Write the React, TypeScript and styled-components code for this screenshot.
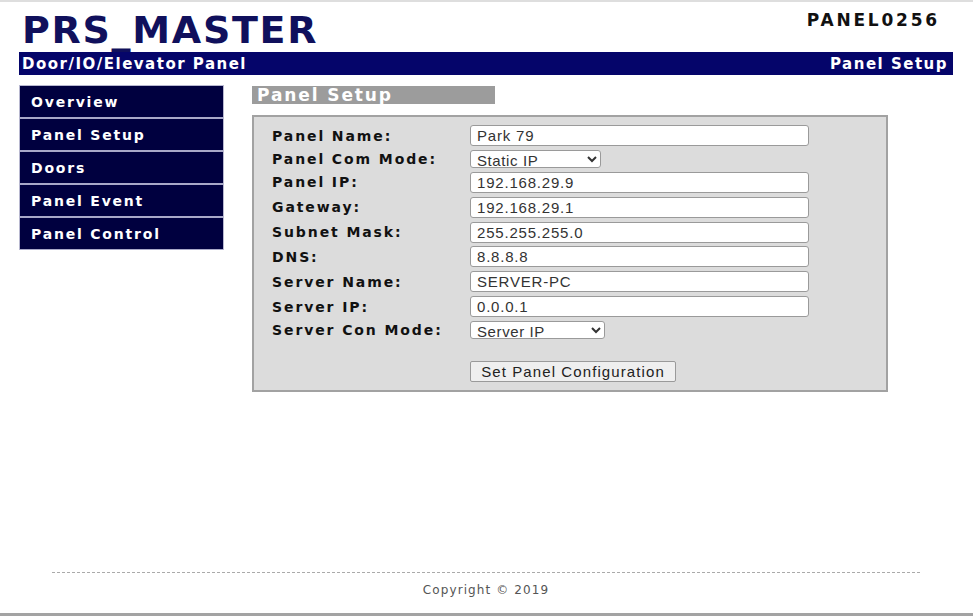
import React from 'react';
import styled, { createGlobalStyle } from 'styled-components';

const GlobalStyle = createGlobalStyle`
  html, body {
    margin: 0;
    padding: 0;
    background: #fff;
  }
  body {
    font-family: 'DejaVu Sans', Verdana, sans-serif;
  }
`;

const Page = styled.div`
  box-sizing: border-box;
  height: 616px;
  border-top: 2px solid #dedede;
  border-bottom: 3px solid #a3a3a3;
  display: flex;
  flex-direction: column;
`;

const Header = styled.header`
  padding: 0 20px 0 19px;
`;

const TitleRow = styled.div`
  height: 50px;
  display: flex;
  justify-content: space-between;
  align-items: flex-start;
`;

const Title = styled.h1`
  margin: 8px 0 0 3px;
  font-size: 38px;
  line-height: 40px;
  letter-spacing: 1.7px;
  font-weight: bold;
  color: #10105c;
`;

const PanelId = styled.div`
  margin: 8px 13px 0 0;
  font-size: 17px;
  font-weight: bold;
  letter-spacing: 2.8px;
  color: #111;
`;

const Bar = styled.div`
  height: 23px;
  background: #05056a;
  color: #fff;
  display: flex;
  align-items: center;
  justify-content: space-between;
  padding: 0 5px 0 3px;
  font-size: 15px;
  font-weight: bold;
  letter-spacing: 1.5px;
`;

const Body = styled.div`
  display: flex;
  align-items: flex-start;
  gap: 28px;
  padding: 10px 0 0 19px;
`;

const Nav = styled.nav`
  box-sizing: border-box;
  width: 205px;
  display: flex;
  flex-direction: column;
  border: 1px solid #b8b8d0;
  border-bottom: none;
  background: #00003f;
`;

const NavItem = styled.a`
  height: 31px;
  display: flex;
  align-items: center;
  padding-left: 11px;
  border-bottom: 2px solid #a8a8c8;
  color: #fff;
  font-size: 14px;
  font-weight: bold;
  letter-spacing: 1.8px;
  text-decoration: none;
  &:last-child {
    border-bottom: 1px solid #a8a8c8;
  }
`;

const Main = styled.main`
  display: flex;
  flex-direction: column;
  gap: 11px;
  padding-top: 1px;
`;

const SectionTitle = styled.h2`
  margin: 0;
  width: 243px;
  height: 18px;
  box-sizing: border-box;
  padding-left: 5px;
  background: #9c9c9c;
  color: #fff;
  font-size: 17px;
  line-height: 19px;
  font-weight: bold;
  letter-spacing: 1.9px;
`;

const FormBox = styled.form`
  box-sizing: border-box;
  width: 636px;
  height: 277px;
  background: #dcdcdc;
  border: 2px solid #a2a2a2;
  padding: 8px 0 0 18px;
  display: grid;
  grid-template-columns: 198px 1fr;
  grid-auto-rows: min-content;
  row-gap: 3.9px;
  align-items: center;
`;

const Label = styled.label`
  font-size: 14px;
  font-weight: bold;
  letter-spacing: 1.9px;
  color: #111;
`;

const TextInput = styled.input`
  box-sizing: border-box;
  width: 339px;
  height: 21px;
  border: 1px solid #9a9a9a;
  border-radius: 3px;
  background: #fff;
  padding: 0 6px;
  font-family: 'Liberation Sans', Arial, sans-serif;
  font-size: 15px;
  letter-spacing: 0.8px;
  color: #333;
`;

const Select = styled.select<{ $w: number }>`
  box-sizing: border-box;
  width: ${p => p.$w}px;
  height: 18px;
  border: 1px solid #9a9a9a;
  border-radius: 3px;
  background: #fff;
  padding: 0 2px;
  font-family: 'Liberation Sans', Arial, sans-serif;
  font-size: 15px;
  letter-spacing: 0.6px;
  color: #333;
`;

const Button = styled.button`
  grid-column: 2;
  justify-self: start;
  margin-top: 18px;
  box-sizing: border-box;
  width: 206px;
  height: 21px;
  border: 1px solid #9a9a9a;
  border-radius: 2px;
  background: #efefef;
  font-family: 'Liberation Sans', Arial, sans-serif;
  font-size: 15px;
  letter-spacing: 1.1px;
  color: #222;
  padding: 0;
`;

const Footer = styled.footer`
  margin: auto 53px 0 52px;
  border-top: 1px dashed #aaa;
  height: 41px;
  box-sizing: border-box;
  padding-top: 10px;
  text-align: center;
  font-size: 12px;
  letter-spacing: 1.1px;
  color: #555;
`;

const fields: { label: string; value?: string; options?: string[]; w?: number }[] = [
  { label: 'Panel Name:', value: 'Park 79' },
  { label: 'Panel Com Mode:', options: ['Static IP', 'DHCP'], w: 131 },
  { label: 'Panel IP:', value: '192.168.29.9' },
  { label: 'Gateway:', value: '192.168.29.1' },
  { label: 'Subnet Mask:', value: '255.255.255.0' },
  { label: 'DNS:', value: '8.8.8.8' },
  { label: 'Server Name:', value: 'SERVER-PC' },
  { label: 'Server IP:', value: '0.0.0.1' },
  { label: 'Server Con Mode:', options: ['Server IP', 'Server Name'], w: 135 },
];

const menu = ['Overview', 'Panel Setup', 'Doors', 'Panel Event', 'Panel Control'];

export default function App() {
  return (
    <>
      <GlobalStyle />
      <Page>
        <Header>
          <TitleRow>
            <Title>PRS_MASTER</Title>
            <PanelId>PANEL0256</PanelId>
          </TitleRow>
          <Bar>
            <span>Door/IO/Elevator Panel</span>
            <span>Panel Setup</span>
          </Bar>
        </Header>
        <Body>
          <Nav>
            {menu.map(m => (
              <NavItem key={m} href="#">{m}</NavItem>
            ))}
          </Nav>
          <Main>
            <SectionTitle>Panel Setup</SectionTitle>
            <FormBox onSubmit={e => e.preventDefault()}>
              {fields.map(f => (
                <React.Fragment key={f.label}>
                  <Label>{f.label}</Label>
                  {f.options ? (
                    <Select $w={f.w ?? 131} defaultValue={f.options[0]}>
                      {f.options.map(o => (
                        <option key={o}>{o}</option>
                      ))}
                    </Select>
                  ) : (
                    <TextInput defaultValue={f.value} />
                  )}
                </React.Fragment>
              ))}
              <Button type="submit">Set Panel Configuration</Button>
            </FormBox>
          </Main>
        </Body>
        <Footer>Copyright © 2019</Footer>
      </Page>
    </>
  );
}
